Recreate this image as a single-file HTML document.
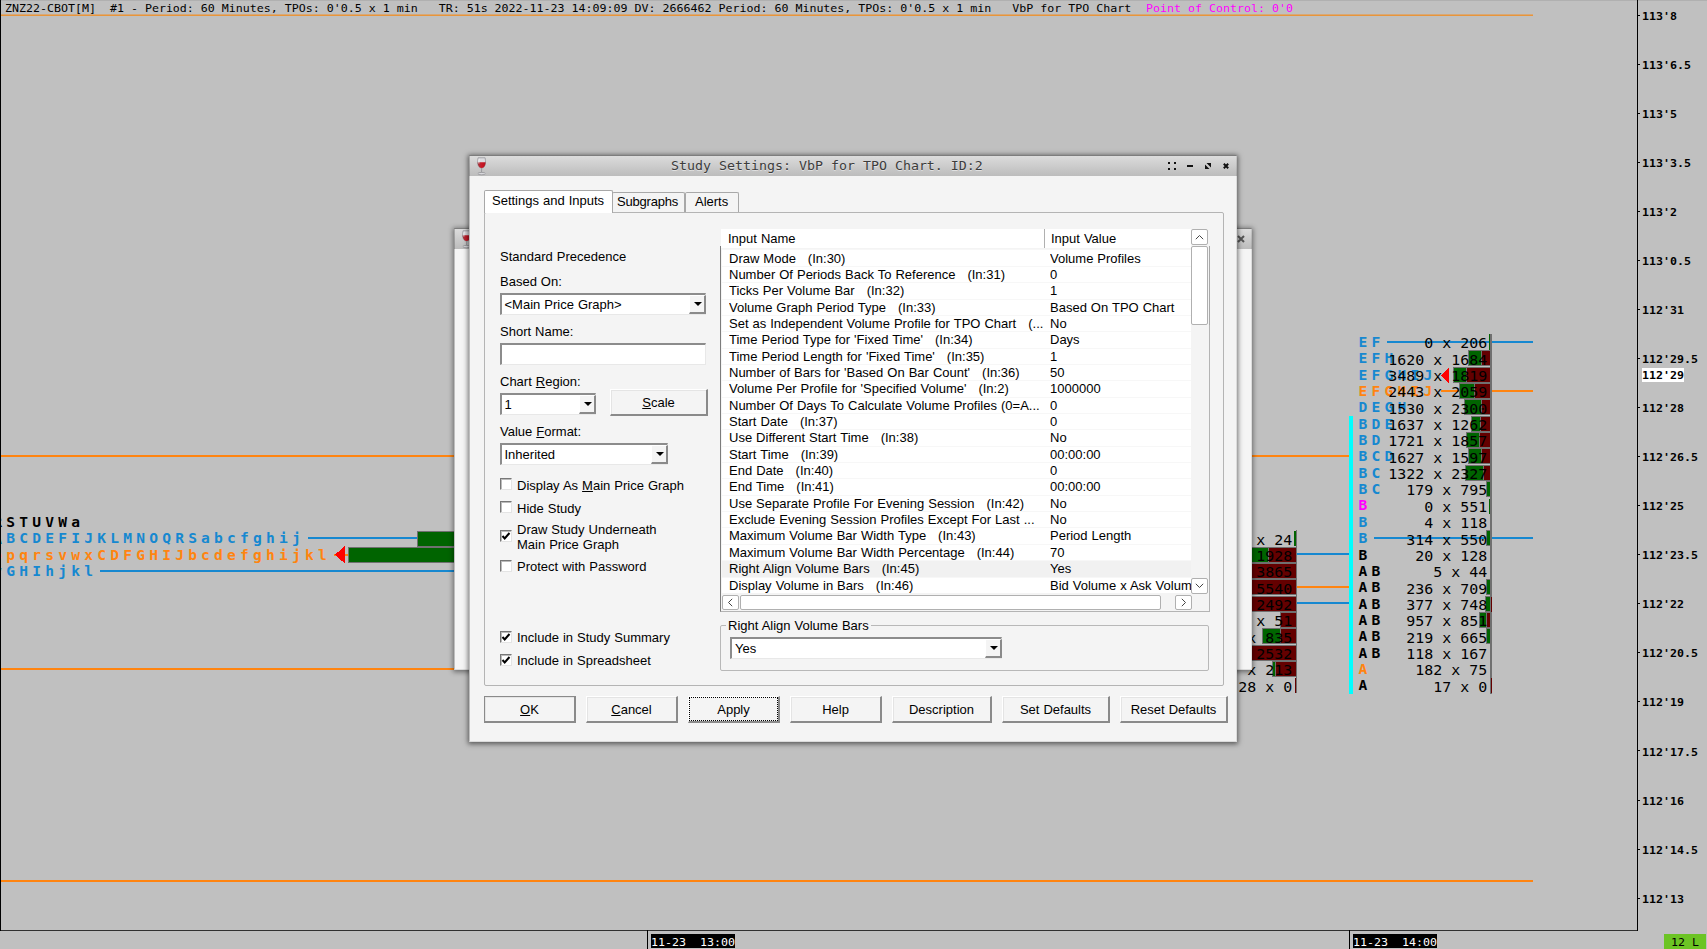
<!DOCTYPE html>
<html><head><meta charset="utf-8"><title>Study Settings</title>
<style>
html,body{margin:0;padding:0;}
body{width:1707px;height:949px;overflow:hidden;background:#c0c0c0;position:relative;font-family:'Liberation Sans',sans-serif;font-size:13px;color:#000;word-spacing:.39px;}
#chart{position:absolute;left:0;top:0;word-spacing:0;}
#chart text{white-space:pre;}
.abs{position:absolute;}
.dlg2{position:absolute;left:454px;top:228px;width:798px;height:442px;background:#f5f5f5;box-shadow:0 1px 5px 1px rgba(0,0,0,.45);}
.dlg{position:absolute;left:469px;top:155px;width:768px;height:587px;background:#f4f4f4;box-shadow:0 1px 5px 1px rgba(0,0,0,.55);}
.dlg:after,.dlg2:after{content:'';position:absolute;left:0;top:0;right:0;bottom:0;border:1px solid rgba(0,0,0,.22);border-top-color:rgba(0,0,0,.3);border-right-color:rgba(0,0,0,.1);border-bottom-color:rgba(0,0,0,.1);pointer-events:none;}
.tbar{position:absolute;left:0;top:0;right:0;height:21px;box-sizing:border-box;border-top:1px solid #b4b4b4;background:linear-gradient(#dcdcdc,#bcbcbc);}
.ttl{word-spacing:0;position:absolute;left:202px;top:3px;font-family:'DejaVu Sans Mono','Liberation Mono',monospace;font-size:13.29px;line-height:15px;color:#3c3c3c;white-space:pre;text-shadow:0 1px 0 rgba(255,255,255,.5);transform:scaleY(.93);transform-origin:0 12px;}
.t{position:absolute;white-space:pre;line-height:15px;height:15px;}
u{text-decoration:underline;text-underline-offset:1px;}
.tab{position:absolute;box-sizing:border-box;border:1px solid #a8a8a8;border-bottom:none;border-radius:2px 2px 0 0;background:#f4f4f4;}
.tab.sel{background:#fff;}
.panel{position:absolute;left:15px;top:57px;width:740px;height:474px;box-sizing:border-box;border:1px solid #b4b4b4;border-radius:2px;background:#f4f4f4;}
.btn{position:absolute;box-sizing:border-box;height:27px;background:#f4f4f4;border-top:1px solid #fff;border-left:1px solid #fff;border-right:2px solid #8a8a8a;border-bottom:2px solid #8a8a8a;box-shadow:inset 1px 1px 0 #e4e4e4;text-align:center;line-height:25px;}
.btn.def{border-top:1px solid #8a8a8a;border-left:1px solid #8a8a8a;}
.sunk{position:absolute;box-sizing:border-box;background:#fff;border-top:2px solid #8c8c8c;border-left:2px solid #8c8c8c;border-right:1px solid #e8e8e8;border-bottom:1px solid #e8e8e8;}
.dd{position:absolute;box-sizing:border-box;width:17px;background:#f4f4f4;border-top:1px solid #fff;border-left:1px solid #fff;border-right:2px solid #8a8a8a;border-bottom:2px solid #8a8a8a;}
.dd:after{content:"";position:absolute;left:4px;top:6px;border:4px solid transparent;border-top:4px solid #000;border-bottom:none;}
.cb{position:absolute;box-sizing:border-box;width:12px;height:12px;background:#fff;border-top:1px solid #777;border-left:1px solid #777;border-right:1px solid #e4e4e4;border-bottom:1px solid #e4e4e4;box-shadow:inset 1px 1px 0 #bbb;}
.row{position:absolute;left:253px;width:469px;height:16px;background:#fff;box-sizing:border-box;border-top:1px solid #f7f7f7;}
.row.sel{background:#f1f1f1;}
.sb{position:absolute;box-sizing:border-box;background:#fff;border:1px solid #b0b0b0;border-radius:2px;}

</style></head><body>
<svg id="chart" width="1707" height="949" viewBox="0 0 1707 949" font-family="'DejaVu Sans Mono','Liberation Mono',monospace" shape-rendering="crispEdges"><rect x="0" y="0" width="1707" height="1" fill="#b0b0b0" />
<rect x="0" y="930" width="1638" height="1" fill="#303030" />
<rect x="1637" y="0" width="1" height="931" fill="#000" />
<rect x="1" y="14" width="1532" height="1" fill="#d8a876" />
<rect x="1" y="15" width="1532" height="1" fill="#e8953a" />
<rect x="0" y="455" width="1349" height="2" fill="#ff8410" />
<rect x="0" y="668" width="1240" height="2" fill="#ff8410" />
<rect x="0" y="880" width="1533" height="2" fill="#ff8410" />
<text x="5" y="12.9" font-size="11.63" fill="#000" xml:space="preserve" transform="scale(1,.93)">ZNZ22-CBOT[M]  #1 - Period: 60 Minutes, TPOs: 0&#x27;0.5 x 1 min   TR: 51s 2022-11-23 14:09:09 DV: 2666462 Period: 60 Minutes, TPOs: 0&#x27;0.5 x 1 min   VbP for TPO Chart  </text>
<text x="1146" y="12.9" font-size="11.63" fill="#ff00ff" xml:space="preserve" transform="scale(1,.93)">Point of Control: 0&#x27;0</text>
<rect x="1638" y="15" width="2" height="1" fill="#000" />
<text x="1642" y="21.29" font-size="11.63" fill="#000" font-weight="bold" xml:space="preserve" transform="scale(1,.93)">113&#x27;8</text>
<rect x="1638" y="64" width="2" height="1" fill="#000" />
<text x="1642" y="73.98" font-size="11.63" fill="#000" font-weight="bold" xml:space="preserve" transform="scale(1,.93)">113&#x27;6.5</text>
<rect x="1638" y="113" width="2" height="1" fill="#000" />
<text x="1642" y="126.77" font-size="11.63" fill="#000" font-weight="bold" xml:space="preserve" transform="scale(1,.93)">113&#x27;5</text>
<rect x="1638" y="162" width="2" height="1" fill="#000" />
<text x="1642" y="179.46" font-size="11.63" fill="#000" font-weight="bold" xml:space="preserve" transform="scale(1,.93)">113&#x27;3.5</text>
<rect x="1638" y="211" width="2" height="1" fill="#000" />
<text x="1642" y="232.26" font-size="11.63" fill="#000" font-weight="bold" xml:space="preserve" transform="scale(1,.93)">113&#x27;2</text>
<rect x="1638" y="260" width="2" height="1" fill="#000" />
<text x="1642" y="285.05" font-size="11.63" fill="#000" font-weight="bold" xml:space="preserve" transform="scale(1,.93)">113&#x27;0.5</text>
<rect x="1638" y="309" width="2" height="1" fill="#000" />
<text x="1642" y="337.74" font-size="11.63" fill="#000" font-weight="bold" xml:space="preserve" transform="scale(1,.93)">112&#x27;31</text>
<rect x="1638" y="358" width="2" height="1" fill="#000" />
<text x="1642" y="390.43" font-size="11.63" fill="#000" font-weight="bold" xml:space="preserve" transform="scale(1,.93)">112&#x27;29.5</text>
<rect x="1638" y="407" width="2" height="1" fill="#000" />
<text x="1642" y="443.23" font-size="11.63" fill="#000" font-weight="bold" xml:space="preserve" transform="scale(1,.93)">112&#x27;28</text>
<rect x="1638" y="456" width="2" height="1" fill="#000" />
<text x="1642" y="495.91" font-size="11.63" fill="#000" font-weight="bold" xml:space="preserve" transform="scale(1,.93)">112&#x27;26.5</text>
<rect x="1638" y="505" width="2" height="1" fill="#000" />
<text x="1642" y="548.71" font-size="11.63" fill="#000" font-weight="bold" xml:space="preserve" transform="scale(1,.93)">112&#x27;25</text>
<rect x="1638" y="554" width="2" height="1" fill="#000" />
<text x="1642" y="601.51" font-size="11.63" fill="#000" font-weight="bold" xml:space="preserve" transform="scale(1,.93)">112&#x27;23.5</text>
<rect x="1638" y="603" width="2" height="1" fill="#000" />
<text x="1642" y="654.19" font-size="11.63" fill="#000" font-weight="bold" xml:space="preserve" transform="scale(1,.93)">112&#x27;22</text>
<rect x="1638" y="652" width="2" height="1" fill="#000" />
<text x="1642" y="706.99" font-size="11.63" fill="#000" font-weight="bold" xml:space="preserve" transform="scale(1,.93)">112&#x27;20.5</text>
<rect x="1638" y="701" width="2" height="1" fill="#000" />
<text x="1642" y="759.68" font-size="11.63" fill="#000" font-weight="bold" xml:space="preserve" transform="scale(1,.93)">112&#x27;19</text>
<rect x="1638" y="750" width="2" height="1" fill="#000" />
<text x="1642" y="812.47" font-size="11.63" fill="#000" font-weight="bold" xml:space="preserve" transform="scale(1,.93)">112&#x27;17.5</text>
<rect x="1638" y="800" width="2" height="1" fill="#000" />
<text x="1642" y="865.16" font-size="11.63" fill="#000" font-weight="bold" xml:space="preserve" transform="scale(1,.93)">112&#x27;16</text>
<rect x="1638" y="849" width="2" height="1" fill="#000" />
<text x="1642" y="917.85" font-size="11.63" fill="#000" font-weight="bold" xml:space="preserve" transform="scale(1,.93)">112&#x27;14.5</text>
<rect x="1638" y="898" width="2" height="1" fill="#000" />
<text x="1642" y="970.65" font-size="11.63" fill="#000" font-weight="bold" xml:space="preserve" transform="scale(1,.93)">112&#x27;13</text>
<rect x="1642" y="368" width="42" height="14" fill="#fff" />
<text x="1642" y="407.53" font-size="11.63" fill="#000" font-weight="bold" xml:space="preserve" transform="scale(1,.93)">112&#x27;29</text>
<rect x="647" y="930" width="1" height="19" fill="#000" />
<rect x="651" y="934" width="84" height="14" fill="#000" />
<text x="651" y="1017.2" font-size="11.63" fill="#fff" xml:space="preserve" transform="scale(1,.93)">11-23  13:00</text>
<rect x="1349" y="930" width="1" height="19" fill="#000" />
<rect x="1353" y="934" width="84" height="14" fill="#000" />
<text x="1353" y="1017.2" font-size="11.63" fill="#fff" xml:space="preserve" transform="scale(1,.93)">11-23  14:00</text>
<rect x="1664" y="934" width="42" height="15" fill="#6cc424" />
<text x="1671" y="1017.2" font-size="11.63" fill="#000" xml:space="preserve" transform="scale(1,.93)">12 L</text>
<text x="-6.324" y="527.3" font-size="13.5" fill="#000" font-weight="bold" letter-spacing="3.909" xml:space="preserve" transform="scale(1.08,1)">R</text>
<text x="-6.324" y="543.6" font-size="13.5" fill="#1688d0" font-weight="bold" letter-spacing="3.909" xml:space="preserve" transform="scale(1.08,1)">A</text>
<text x="-6.324" y="560" font-size="13.5" fill="#ff8410" font-weight="bold" letter-spacing="3.909" xml:space="preserve" transform="scale(1.08,1)">o</text>
<text x="-6.324" y="576.3" font-size="13.5" fill="#1688d0" font-weight="bold" letter-spacing="3.909" xml:space="preserve" transform="scale(1.08,1)">v</text>
<text x="5.713" y="527.3" font-size="13.5" fill="#000" font-weight="bold" letter-spacing="3.909" xml:space="preserve" transform="scale(1.08,1)">STUVWa</text>
<text x="5.713" y="543.5" font-size="13.5" fill="#1688d0" font-weight="bold" letter-spacing="3.909" xml:space="preserve" transform="scale(1.08,1)">BCDEFIJKLMNOQRSabcfghij</text>
<text x="5.713" y="559.7" font-size="13.5" fill="#ff8410" font-weight="bold" letter-spacing="3.909" xml:space="preserve" transform="scale(1.08,1)">pqrsvwxCDFGHIJbcdefghijkl</text>
<text x="5.713" y="576.3" font-size="13.5" fill="#1688d0" font-weight="bold" letter-spacing="3.909" xml:space="preserve" transform="scale(1.08,1)">GHIhjkl</text>
<rect x="308" y="537" width="110" height="2" fill="#1688d0" />
<rect x="100" y="570" width="360" height="2" fill="#1688d0" />
<rect x="334" y="553.5" width="16" height="2" fill="#ff8410" />
<rect x="417.5" y="531.5" width="45" height="15" fill="#006400" stroke="#707070" stroke-width="1"/>
<rect x="348.5" y="547.5" width="115" height="15" fill="#006400" stroke="#707070" stroke-width="1"/>
<polygon points="335,554.7 344.5,546.3 344.5,563.2" fill="#ff0000"/>
<rect x="1387" y="341" width="146" height="2" fill="#1688d0" />
<rect x="1441" y="390" width="92" height="2" fill="#ff8410" />
<rect x="1374" y="537" width="159" height="2" fill="#1688d0" />
<rect x="1297" y="553" width="52" height="2" fill="#1688d0" />
<rect x="1297" y="586" width="52" height="2" fill="#ff8410" />
<rect x="1297" y="602" width="52" height="2" fill="#1688d0" />
<rect x="1349" y="416" width="4" height="278" fill="#00ffff" />
<text x="1257.843" y="347.0" font-size="13.5" fill="#1688d0" font-weight="bold" letter-spacing="3.909" xml:space="preserve" transform="scale(1.08,1)">EF</text>
<text x="1257.843" y="363.35" font-size="13.5" fill="#1688d0" font-weight="bold" letter-spacing="3.909" xml:space="preserve" transform="scale(1.08,1)">EFH</text>
<text x="1257.843" y="379.7" font-size="13.5" fill="#1688d0" font-weight="bold" letter-spacing="3.909" xml:space="preserve" transform="scale(1.08,1)">EFGHIJ</text>
<text x="1257.843" y="396.05" font-size="13.5" fill="#ff8410" font-weight="bold" letter-spacing="3.909" xml:space="preserve" transform="scale(1.08,1)">EFGHIJ</text>
<text x="1257.843" y="412.4" font-size="13.5" fill="#1688d0" font-weight="bold" letter-spacing="3.909" xml:space="preserve" transform="scale(1.08,1)">DEGH</text>
<text x="1257.843" y="428.75" font-size="13.5" fill="#1688d0" font-weight="bold" letter-spacing="3.909" xml:space="preserve" transform="scale(1.08,1)">BDE</text>
<text x="1257.843" y="445.1" font-size="13.5" fill="#1688d0" font-weight="bold" letter-spacing="3.909" xml:space="preserve" transform="scale(1.08,1)">BD</text>
<text x="1257.843" y="461.45000000000005" font-size="13.5" fill="#1688d0" font-weight="bold" letter-spacing="3.909" xml:space="preserve" transform="scale(1.08,1)">BCD</text>
<text x="1257.843" y="477.8" font-size="13.5" fill="#1688d0" font-weight="bold" letter-spacing="3.909" xml:space="preserve" transform="scale(1.08,1)">BC</text>
<text x="1257.843" y="494.15" font-size="13.5" fill="#1688d0" font-weight="bold" letter-spacing="3.909" xml:space="preserve" transform="scale(1.08,1)">BC</text>
<text x="1257.843" y="510.5" font-size="13.5" fill="#ff00ff" font-weight="bold" letter-spacing="3.909" xml:space="preserve" transform="scale(1.08,1)">B</text>
<text x="1257.843" y="526.85" font-size="13.5" fill="#1688d0" font-weight="bold" letter-spacing="3.909" xml:space="preserve" transform="scale(1.08,1)">B</text>
<text x="1257.843" y="543.2" font-size="13.5" fill="#1688d0" font-weight="bold" letter-spacing="3.909" xml:space="preserve" transform="scale(1.08,1)">B</text>
<text x="1257.843" y="559.55" font-size="13.5" fill="#000" font-weight="bold" letter-spacing="3.909" xml:space="preserve" transform="scale(1.08,1)">B</text>
<text x="1257.843" y="575.9000000000001" font-size="13.5" fill="#000" font-weight="bold" letter-spacing="3.909" xml:space="preserve" transform="scale(1.08,1)">AB</text>
<text x="1257.843" y="592.25" font-size="13.5" fill="#000" font-weight="bold" letter-spacing="3.909" xml:space="preserve" transform="scale(1.08,1)">AB</text>
<text x="1257.843" y="608.6" font-size="13.5" fill="#000" font-weight="bold" letter-spacing="3.909" xml:space="preserve" transform="scale(1.08,1)">AB</text>
<text x="1257.843" y="624.95" font-size="13.5" fill="#000" font-weight="bold" letter-spacing="3.909" xml:space="preserve" transform="scale(1.08,1)">AB</text>
<text x="1257.843" y="641.3" font-size="13.5" fill="#000" font-weight="bold" letter-spacing="3.909" xml:space="preserve" transform="scale(1.08,1)">AB</text>
<text x="1257.843" y="657.6500000000001" font-size="13.5" fill="#000" font-weight="bold" letter-spacing="3.909" xml:space="preserve" transform="scale(1.08,1)">AB</text>
<text x="1257.843" y="674.0" font-size="13.5" fill="#ff8410" font-weight="bold" letter-spacing="3.909" xml:space="preserve" transform="scale(1.08,1)">A</text>
<text x="1257.843" y="690.35" font-size="13.5" fill="#000" font-weight="bold" letter-spacing="3.909" xml:space="preserve" transform="scale(1.08,1)">A</text>
<rect x="1489" y="334.5" width="2" height="15.5" fill="#006400" />
<rect x="1468.5" y="350.5" width="22.0" height="15" fill="#006400" stroke="#707070" stroke-width="1"/>
<rect x="1481" y="350.5" width="9.5" height="15" fill="#640000" stroke="#707070" stroke-width="1"/>
<rect x="1453.5" y="367.5" width="37.0" height="15" fill="#006400" stroke="#707070" stroke-width="1"/>
<rect x="1466.5" y="367.5" width="24.0" height="15" fill="#640000" stroke="#707070" stroke-width="1"/>
<rect x="1459.5" y="383.5" width="31.0" height="15" fill="#006400" stroke="#707070" stroke-width="1"/>
<rect x="1474.5" y="383.5" width="16.0" height="15" fill="#640000" stroke="#707070" stroke-width="1"/>
<rect x="1464.5" y="399.5" width="26.0" height="15" fill="#006400" stroke="#707070" stroke-width="1"/>
<rect x="1481.5" y="399.5" width="9.0" height="15" fill="#640000" stroke="#707070" stroke-width="1"/>
<rect x="1471.5" y="416.5" width="19.0" height="15" fill="#006400" stroke="#707070" stroke-width="1"/>
<rect x="1480" y="416.5" width="10.5" height="15" fill="#640000" stroke="#707070" stroke-width="1"/>
<rect x="1466.5" y="432.5" width="24.0" height="15" fill="#006400" stroke="#707070" stroke-width="1"/>
<rect x="1479.5" y="432.5" width="11.0" height="15" fill="#640000" stroke="#707070" stroke-width="1"/>
<rect x="1468.5" y="448.5" width="22.0" height="15" fill="#006400" stroke="#707070" stroke-width="1"/>
<rect x="1481" y="448.5" width="9.5" height="15" fill="#640000" stroke="#707070" stroke-width="1"/>
<rect x="1465.5" y="465.5" width="25.0" height="15" fill="#006400" stroke="#707070" stroke-width="1"/>
<rect x="1483" y="465.5" width="7.5" height="15" fill="#640000" stroke="#707070" stroke-width="1"/>
<rect x="1486" y="481.5" width="4.5" height="15" fill="#006400" stroke="#707070" stroke-width="1"/>
<rect x="1489" y="498.5" width="2" height="15.5" fill="#006400" />
<rect x="1490" y="514.5" width="1" height="15.5" fill="#006400" />
<rect x="1486.5" y="530.5" width="4.0" height="15" fill="#006400" stroke="#707070" stroke-width="1"/>
<rect x="1489.5" y="547.5" width="1.5" height="15.5" fill="#006400" />
<rect x="1490" y="563.5" width="1" height="15.5" fill="#006400" />
<rect x="1486" y="579.5" width="4.5" height="15" fill="#006400" stroke="#707070" stroke-width="1"/>
<rect x="1485" y="596.5" width="5.5" height="15" fill="#006400" stroke="#707070" stroke-width="1"/>
<rect x="1490" y="596.5" width="1" height="15.5" fill="#640000" />
<rect x="1479.5" y="612.5" width="11.0" height="15" fill="#006400" stroke="#707070" stroke-width="1"/>
<rect x="1486" y="612.5" width="4.5" height="15" fill="#640000" stroke="#707070" stroke-width="1"/>
<rect x="1486.5" y="628.5" width="4.0" height="15" fill="#006400" stroke="#707070" stroke-width="1"/>
<rect x="1490" y="645.5" width="1" height="15.5" fill="#006400" />
<rect x="1490.5" y="661.5" width="0.5" height="15.5" fill="#006400" />
<rect x="1490.5" y="677.5" width="0.5" height="15.5" fill="#640000" />
<rect x="1490" y="334" width="1.5" height="360" fill="#707070" />
<rect x="1491" y="597" width="1" height="15" fill="#640000" />
<rect x="1491" y="678" width="1" height="15" fill="#640000" />
<rect x="1489" y="334" width="1.2" height="16" fill="#006400" />
<polygon points="1441,375 1449,367 1449,383.3" fill="#ff0000"/>
<text x="1487.3" y="348.3" font-size="14.95" fill="#000" text-anchor="end" xml:space="preserve" >0 x 206</text>
<text x="1487.3" y="364.65000000000003" font-size="14.95" fill="#000" text-anchor="end" xml:space="preserve" >1620 x 1684</text>
<text x="1487.3" y="381.0" font-size="14.95" fill="#000" text-anchor="end" xml:space="preserve" >3489 x 1819</text>
<text x="1487.3" y="397.35" font-size="14.95" fill="#000" text-anchor="end" xml:space="preserve" >2443 x 2059</text>
<text x="1487.3" y="413.7" font-size="14.95" fill="#000" text-anchor="end" xml:space="preserve" >1530 x 2300</text>
<text x="1487.3" y="430.05" font-size="14.95" fill="#000" text-anchor="end" xml:space="preserve" >1637 x 1262</text>
<text x="1487.3" y="446.40000000000003" font-size="14.95" fill="#000" text-anchor="end" xml:space="preserve" >1721 x 1857</text>
<text x="1487.3" y="462.75000000000006" font-size="14.95" fill="#000" text-anchor="end" xml:space="preserve" >1627 x 1597</text>
<text x="1487.3" y="479.1" font-size="14.95" fill="#000" text-anchor="end" xml:space="preserve" >1322 x 2327</text>
<text x="1487.3" y="495.45" font-size="14.95" fill="#000" text-anchor="end" xml:space="preserve" >179 x 795</text>
<text x="1487.3" y="511.8" font-size="14.95" fill="#000" text-anchor="end" xml:space="preserve" >0 x 551</text>
<text x="1487.3" y="528.15" font-size="14.95" fill="#000" text-anchor="end" xml:space="preserve" >4 x 118</text>
<text x="1487.3" y="544.5" font-size="14.95" fill="#000" text-anchor="end" xml:space="preserve" >314 x 550</text>
<text x="1487.3" y="560.8499999999999" font-size="14.95" fill="#000" text-anchor="end" xml:space="preserve" >20 x 128</text>
<text x="1487.3" y="577.2" font-size="14.95" fill="#000" text-anchor="end" xml:space="preserve" >5 x 44</text>
<text x="1487.3" y="593.55" font-size="14.95" fill="#000" text-anchor="end" xml:space="preserve" >236 x 709</text>
<text x="1487.3" y="609.9" font-size="14.95" fill="#000" text-anchor="end" xml:space="preserve" >377 x 748</text>
<text x="1487.3" y="626.25" font-size="14.95" fill="#000" text-anchor="end" xml:space="preserve" >957 x 851</text>
<text x="1487.3" y="642.5999999999999" font-size="14.95" fill="#000" text-anchor="end" xml:space="preserve" >219 x 665</text>
<text x="1487.3" y="658.95" font-size="14.95" fill="#000" text-anchor="end" xml:space="preserve" >118 x 167</text>
<text x="1487.3" y="675.3" font-size="14.95" fill="#000" text-anchor="end" xml:space="preserve" >182 x 75</text>
<text x="1487.3" y="691.65" font-size="14.95" fill="#000" text-anchor="end" xml:space="preserve" >17 x 0</text>
<rect x="1294" y="530.5" width="2.5" height="15.5" fill="#006400" />
<text x="1292.3" y="544.5" font-size="14.95" fill="#000" text-anchor="end" xml:space="preserve" >x 24</text>
<rect x="1240" y="547.5" width="56.5" height="15" fill="#006400" stroke="#707070" stroke-width="1"/>
<rect x="1268" y="547.5" width="28.5" height="15" fill="#640000" stroke="#707070" stroke-width="1"/>
<text x="1292.3" y="560.8499999999999" font-size="14.95" fill="#000" text-anchor="end" xml:space="preserve" >1928</text>
<rect x="1240" y="563.5" width="56.5" height="15" fill="#640000" stroke="#707070" stroke-width="1"/>
<text x="1292.3" y="577.2" font-size="14.95" fill="#000" text-anchor="end" xml:space="preserve" >3865</text>
<rect x="1240" y="579.5" width="56.5" height="15" fill="#640000" stroke="#707070" stroke-width="1"/>
<text x="1292.3" y="593.55" font-size="14.95" fill="#000" text-anchor="end" xml:space="preserve" >5540</text>
<rect x="1240" y="596.5" width="56.5" height="15" fill="#640000" stroke="#707070" stroke-width="1"/>
<text x="1292.3" y="609.9" font-size="14.95" fill="#000" text-anchor="end" xml:space="preserve" >2492</text>
<rect x="1280" y="612.5" width="16.5" height="15" fill="#640000" stroke="#707070" stroke-width="1"/>
<text x="1292.3" y="626.25" font-size="14.95" fill="#000" text-anchor="end" xml:space="preserve" >x 51</text>
<rect x="1262.5" y="628.5" width="34.0" height="15" fill="#006400" stroke="#707070" stroke-width="1"/>
<rect x="1280" y="628.5" width="16.5" height="15" fill="#640000" stroke="#707070" stroke-width="1"/>
<text x="1292.3" y="642.5999999999999" font-size="14.95" fill="#000" text-anchor="end" xml:space="preserve" >x 835</text>
<rect x="1240" y="645.5" width="56.5" height="15" fill="#640000" stroke="#707070" stroke-width="1"/>
<text x="1292.3" y="658.95" font-size="14.95" fill="#000" text-anchor="end" xml:space="preserve" >2532</text>
<rect x="1272.5" y="661.5" width="24.0" height="15" fill="#006400" stroke="#707070" stroke-width="1"/>
<rect x="1275" y="661.5" width="21.5" height="15" fill="#640000" stroke="#707070" stroke-width="1"/>
<text x="1292.3" y="675.3" font-size="14.95" fill="#000" text-anchor="end" xml:space="preserve" >x 213</text>
<rect x="1295" y="677.5" width="1.5" height="15.5" fill="#640000" />
<text x="1292.3" y="691.65" font-size="14.95" fill="#000" text-anchor="end" xml:space="preserve" >28 x 0</text>
<rect x="1296" y="530" width="1.2" height="163" fill="#707070" />
<rect x="0" y="0" width="1" height="931" fill="#000" /></svg>
<div class="dlg2">
 <div class="tbar" style="height:21px"></div>
 <svg class="abs" style="left:7.500px;top:1.500px" width="10" height="19" viewBox="0 0 10 19"><defs><clipPath id="wc"><rect x="0" y="5.300" width="10" height="8"/></clipPath><linearGradient id="wg" x1="0" y1="0" x2="1" y2="0"><stop offset="0" stop-color="#9a3a42"/><stop offset=".5" stop-color="#cc1826"/><stop offset="1" stop-color="#b01420"/></linearGradient></defs><path d="M1.100.8h7c.4 1.500.5 3.500.4 5.500-.2 2.900-1.900 4.700-3.900 4.700S.9 9.200.7 6.300C.6 4.300.7 2.300 1.100.800z" fill="#dcdce0" stroke="#8c8c90" stroke-width=".7"/><path d="M1.100.8h7c.4 1.500.5 3.500.4 5.500-.2 2.900-1.900 4.700-3.900 4.700S.9 9.200.7 6.300C.6 4.300.7 2.300 1.100.800z" fill="url(#wg)" clip-path="url(#wc)"/><path d="M2.200 1.800c-.4 1.600-.5 3.200-.3 4.800" stroke="#fff" stroke-width=".8" fill="none" opacity=".8"/><rect x="4.100" y="11" width="1" height="4.800" fill="#9a9a9e"/><ellipse cx="4.600" cy="16.600" rx="3.700" ry="1.200" fill="#d8d8dc" stroke="#8c8c90" stroke-width=".7"/></svg>
 <svg class="abs" style="left:783px;top:7px" width="8" height="8" viewBox="0 0 8 8"><path d="M1 1l6 6M7 1l-6 6" stroke="#555" stroke-width="2"/></svg>
</div>
<div class="dlg">
 <div class="tbar"></div>
 <svg class="abs" style="left:7.500px;top:1.500px" width="10" height="19" viewBox="0 0 10 19"><defs><clipPath id="wc2"><rect x="0" y="5.300" width="10" height="8"/></clipPath><linearGradient id="wg2" x1="0" y1="0" x2="1" y2="0"><stop offset="0" stop-color="#9a3a42"/><stop offset=".5" stop-color="#cc1826"/><stop offset="1" stop-color="#b01420"/></linearGradient></defs><path d="M1.100.8h7c.4 1.500.5 3.500.4 5.500-.2 2.900-1.900 4.700-3.900 4.700S.9 9.200.7 6.300C.6 4.300.7 2.300 1.100.800z" fill="#dcdce0" stroke="#8c8c90" stroke-width=".7"/><path d="M1.100.8h7c.4 1.500.5 3.500.4 5.500-.2 2.900-1.900 4.700-3.900 4.700S.9 9.200.7 6.300C.6 4.300.7 2.300 1.100.800z" fill="url(#wg2)" clip-path="url(#wc2)"/><path d="M2.200 1.800c-.4 1.600-.5 3.200-.3 4.800" stroke="#fff" stroke-width=".8" fill="none" opacity=".8"/><rect x="4.100" y="11" width="1" height="4.800" fill="#9a9a9e"/><ellipse cx="4.600" cy="16.600" rx="3.700" ry="1.200" fill="#d8d8dc" stroke="#8c8c90" stroke-width=".7"/></svg>
 <div class="ttl">Study Settings: VbP for TPO Chart. ID:2</div>
 <svg class="abs" style="left:698px;top:6px" width="64" height="10" viewBox="0 0 64 10" fill="#111"><rect x="1" y="1" width="2" height="2"/><rect x="7" y="1" width="2" height="2"/><rect x="1" y="7" width="2" height="2"/><rect x="7" y="7" width="2" height="2"/><rect x="20" y="4" width="6" height="2"/><path d="M39.500 2H44V6.500zM38 3.500V8h4.500z"/><path d="M56.800 2.800l4.400 4.400M61.200 2.800l-4.400 4.400" stroke="#111" stroke-width="2" fill="none"/></svg>

 <div class="panel"></div>
 <div class="tab" style="left:143px;top:37px;width:73px;height:20px"></div>
 <div class="tab" style="left:216px;top:37px;width:54px;height:20px"></div>
 <div class="tab sel" style="left:15px;top:35px;width:129px;height:23px"></div>
 <div class="t" style="left:23px;top:38px">Settings and Inputs</div>
 <div class="t" style="left:148px;top:39px;letter-spacing:-.2px">Subgraphs</div>
 <div class="t" style="left:226px;top:39px">Alerts</div>

 <!-- left column -->
 <div class="t" style="left:31px;top:94px">Standard Precedence</div>
 <div class="t" style="left:31px;top:119px">Based On:</div>
 <div class="sunk" style="left:31px;top:138px;width:206px;height:22px"></div>
 <div class="t" style="left:35.500px;top:142px">&lt;Main Price Graph&gt;</div>
 <div class="dd" style="left:220px;top:140px;height:19px"></div>
 <div class="t" style="left:31px;top:169px">Short Name:</div>
 <div class="sunk" style="left:31px;top:188px;width:206px;height:22px"></div>
 <div class="t" style="left:31px;top:219px">Chart <u>R</u>egion:</div>
 <div class="sunk" style="left:31px;top:238px;width:96px;height:22px"></div>
 <div class="t" style="left:35.500px;top:242px">1</div>
 <div class="dd" style="left:110px;top:240px;height:19px"></div>
 <div class="btn" style="left:141px;top:234px;width:98px;height:27px"><u>S</u>cale</div>
 <div class="t" style="left:31px;top:269px">Value <u>F</u>ormat:</div>
 <div class="sunk" style="left:31px;top:288px;width:168px;height:22px"></div>
 <div class="t" style="left:35.500px;top:292px">Inherited</div>
 <div class="dd" style="left:182px;top:290px;height:19px"></div>

 <div class="cb" style="left:31px;top:323px"></div>
 <div class="t" style="left:48px;top:323px">Display As <u>M</u>ain Price Graph</div>
 <div class="cb" style="left:31px;top:346px"></div>
 <div class="t" style="left:48px;top:346px">Hide Study</div>
 <div class="cb" style="left:31px;top:375px"></div>
 <svg class="abs" style="left:32px;top:376px" width="10" height="10" viewBox="0 0 10 10"><path d="M1.5 5l2.200 2.500L8.500 2" stroke="#000" stroke-width="2" fill="none"/></svg>
 <div class="t" style="left:48px;top:367px">Draw Study Underneath</div>
 <div class="t" style="left:48px;top:382px">Main Price Graph</div>
 <div class="cb" style="left:31px;top:405px"></div>
 <div class="t" style="left:48px;top:404px">Protect with Password</div>
 <div class="cb" style="left:31px;top:476px"></div>
 <svg class="abs" style="left:32px;top:477px" width="10" height="10" viewBox="0 0 10 10"><path d="M1.5 5l2.200 2.500L8.500 2" stroke="#000" stroke-width="2" fill="none"/></svg>
 <div class="t" style="left:48px;top:475px">Include in Study Summary</div>
 <div class="cb" style="left:31px;top:499px"></div>
 <svg class="abs" style="left:32px;top:500px" width="10" height="10" viewBox="0 0 10 10"><path d="M1.5 5l2.200 2.500L8.500 2" stroke="#000" stroke-width="2" fill="none"/></svg>
 <div class="t" style="left:48px;top:498px">Include in Spreadsheet</div>

 <!-- list -->
 <div class="abs" style="left:251px;top:91px;width:490px;height:366px;box-sizing:border-box;border:1px solid #b4b4b4;border-left:1px solid #7c7c7c;border-top:none;background:#f4f4f4"></div>
 <div class="abs" style="left:252px;top:74px;width:470px;height:19px;background:#fff"></div>
 <div class="abs" style="left:575px;top:74px;width:1px;height:19px;background:#b0b0b0"></div>
 <div class="t" style="left:259px;top:76px">Input Name</div>
 <div class="t" style="left:582px;top:76px">Input Value</div>
 <div class="row" style="top:94px;height:17px"></div>
<div class="t" style="left:260px;top:96px;width:315px;overflow:hidden">Draw Mode   (In:30)</div>
<div class="t" style="left:581px;top:96px;width:141px;overflow:hidden">Volume Profiles</div>
<div class="row" style="top:111px;height:16px"></div>
<div class="t" style="left:260px;top:112px;width:315px;overflow:hidden">Number Of Periods Back To Reference   (In:31)</div>
<div class="t" style="left:581px;top:112px;width:141px;overflow:hidden">0</div>
<div class="row" style="top:127px;height:17px"></div>
<div class="t" style="left:260px;top:128px;width:315px;overflow:hidden">Ticks Per Volume Bar   (In:32)</div>
<div class="t" style="left:581px;top:128px;width:141px;overflow:hidden">1</div>
<div class="row" style="top:144px;height:16px"></div>
<div class="t" style="left:260px;top:145px;width:315px;overflow:hidden">Volume Graph Period Type   (In:33)</div>
<div class="t" style="left:581px;top:145px;width:141px;overflow:hidden">Based On TPO Chart</div>
<div class="row" style="top:160px;height:16px"></div>
<div class="t" style="left:260px;top:161px;width:315px;overflow:hidden">Set as Independent Volume Profile for TPO Chart   (...</div>
<div class="t" style="left:581px;top:161px;width:141px;overflow:hidden">No</div>
<div class="row" style="top:176px;height:17px"></div>
<div class="t" style="left:260px;top:177px;width:315px;overflow:hidden">Time Period Type for &#x27;Fixed Time&#x27;   (In:34)</div>
<div class="t" style="left:581px;top:177px;width:141px;overflow:hidden">Days</div>
<div class="row" style="top:193px;height:16px"></div>
<div class="t" style="left:260px;top:194px;width:315px;overflow:hidden">Time Period Length for &#x27;Fixed Time&#x27;   (In:35)</div>
<div class="t" style="left:581px;top:194px;width:141px;overflow:hidden">1</div>
<div class="row" style="top:209px;height:16px"></div>
<div class="t" style="left:260px;top:210px;width:315px;overflow:hidden">Number of Bars for &#x27;Based On Bar Count&#x27;   (In:36)</div>
<div class="t" style="left:581px;top:210px;width:141px;overflow:hidden">50</div>
<div class="row" style="top:225px;height:17px"></div>
<div class="t" style="left:260px;top:226px;width:315px;overflow:hidden">Volume Per Profile for &#x27;Specified Volume&#x27;   (In:2)</div>
<div class="t" style="left:581px;top:226px;width:141px;overflow:hidden">1000000</div>
<div class="row" style="top:242px;height:16px"></div>
<div class="t" style="left:260px;top:243px;width:315px;overflow:hidden">Number Of Days To Calculate Volume Profiles (0=A...</div>
<div class="t" style="left:581px;top:243px;width:141px;overflow:hidden">0</div>
<div class="row" style="top:258px;height:16px"></div>
<div class="t" style="left:260px;top:259px;width:315px;overflow:hidden">Start Date   (In:37)</div>
<div class="t" style="left:581px;top:259px;width:141px;overflow:hidden">0</div>
<div class="row" style="top:274px;height:17px"></div>
<div class="t" style="left:260px;top:275px;width:315px;overflow:hidden">Use Different Start Time   (In:38)</div>
<div class="t" style="left:581px;top:275px;width:141px;overflow:hidden">No</div>
<div class="row" style="top:291px;height:16px"></div>
<div class="t" style="left:260px;top:292px;width:315px;overflow:hidden">Start Time   (In:39)</div>
<div class="t" style="left:581px;top:292px;width:141px;overflow:hidden">00:00:00</div>
<div class="row" style="top:307px;height:16px"></div>
<div class="t" style="left:260px;top:308px;width:315px;overflow:hidden">End Date   (In:40)</div>
<div class="t" style="left:581px;top:308px;width:141px;overflow:hidden">0</div>
<div class="row" style="top:323px;height:17px"></div>
<div class="t" style="left:260px;top:324px;width:315px;overflow:hidden">End Time   (In:41)</div>
<div class="t" style="left:581px;top:324px;width:141px;overflow:hidden">00:00:00</div>
<div class="row" style="top:340px;height:16px"></div>
<div class="t" style="left:260px;top:341px;width:315px;overflow:hidden">Use Separate Profile For Evening Session   (In:42)</div>
<div class="t" style="left:581px;top:341px;width:141px;overflow:hidden">No</div>
<div class="row" style="top:356px;height:16px"></div>
<div class="t" style="left:260px;top:357px;width:315px;overflow:hidden">Exclude Evening Session Profiles Except For Last ...</div>
<div class="t" style="left:581px;top:357px;width:141px;overflow:hidden">No</div>
<div class="row" style="top:372px;height:17px"></div>
<div class="t" style="left:260px;top:373px;width:315px;overflow:hidden">Maximum Volume Bar Width Type   (In:43)</div>
<div class="t" style="left:581px;top:373px;width:141px;overflow:hidden">Period Length</div>
<div class="row" style="top:389px;height:16px"></div>
<div class="t" style="left:260px;top:390px;width:315px;overflow:hidden">Maximum Volume Bar Width Percentage   (In:44)</div>
<div class="t" style="left:581px;top:390px;width:141px;overflow:hidden">70</div>
<div class="row sel" style="top:405px;height:17px"></div>
<div class="t" style="left:260px;top:406px;width:315px;overflow:hidden">Right Align Volume Bars   (In:45)</div>
<div class="t" style="left:581px;top:406px;width:141px;overflow:hidden">Yes</div>
<div class="row" style="top:422px;height:16px"></div>
<div class="t" style="left:260px;top:423px;width:315px;overflow:hidden">Display Volume in Bars   (In:46)</div>
<div class="t" style="left:581px;top:423px;width:141px;overflow:hidden">Bid Volume x Ask Volume</div>
 <div class="sb" style="left:722px;top:74px;width:17px;height:16px"></div>
 <svg class="abs" style="left:726px;top:79px" width="9" height="6" viewBox="0 0 9 6"><path d="M.8 5.200L4.500 1.500l3.700 3.700" stroke="#444" stroke-width="1" fill="none"/></svg>
 <div class="sb" style="left:722px;top:91px;width:17px;height:79px"></div>
 <div class="abs" style="left:740px;top:91px;width:1px;height:79px;background:#a8a8a8"></div>
 <div class="sb" style="left:722px;top:423px;width:17px;height:16px"></div>
 <svg class="abs" style="left:726px;top:428px" width="9" height="6" viewBox="0 0 9 6"><path d="M.8 .8L4.500 4.500l3.700-3.700" stroke="#444" stroke-width="1" fill="none"/></svg>
 <div class="sb" style="left:253px;top:440px;width:17px;height:15px"></div>
 <svg class="abs" style="left:258px;top:443px" width="6" height="9" viewBox="0 0 6 9"><path d="M5.200 .8L1.500 4.500l3.700 3.700" stroke="#444" stroke-width="1" fill="none"/></svg>
 <div class="sb" style="left:271px;top:440px;width:421px;height:15px"></div>
 <div class="sb" style="left:706px;top:440px;width:17px;height:15px"></div>
 <svg class="abs" style="left:712px;top:443px" width="6" height="9" viewBox="0 0 6 9"><path d="M.8 .8L4.500 4.500L.8 8.200" stroke="#444" stroke-width="1" fill="none"/></svg>

 <!-- group box -->
 <div class="abs" style="left:251px;top:470px;width:489px;height:46px;box-sizing:border-box;border:1px solid #b8b8b8;border-radius:2px"></div>
 <div class="t" style="left:257px;top:463px;background:#f4f4f4;padding:0 2px">Right Align Volume Bars</div>
 <div class="sunk" style="left:261px;top:482px;width:272px;height:22px"></div>
 <div class="t" style="left:266px;top:486px">Yes</div>
 <div class="dd" style="left:516px;top:484px;height:19px"></div>

 <!-- buttons -->
 <div class="btn def" style="left:15px;top:541px;width:92px"><u>O</u>K</div>
 <div class="btn" style="left:117px;top:541px;width:92px"><u>C</u>ancel</div>
 <div class="btn" style="left:219px;top:541px;width:92px;box-shadow:none">Apply<div class="abs" style="left:0;top:0;right:0;bottom:0;border:1px dotted #000"></div></div>
 <div class="btn" style="left:321px;top:541px;width:92px">Help</div>
 <div class="btn" style="left:423px;top:541px;width:100px">Description</div>
 <div class="btn" style="left:533px;top:541px;width:108px">Set Defaults</div>
 <div class="btn" style="left:651px;top:541px;width:108px">Reset Defaults</div>
</div>

</body></html>
